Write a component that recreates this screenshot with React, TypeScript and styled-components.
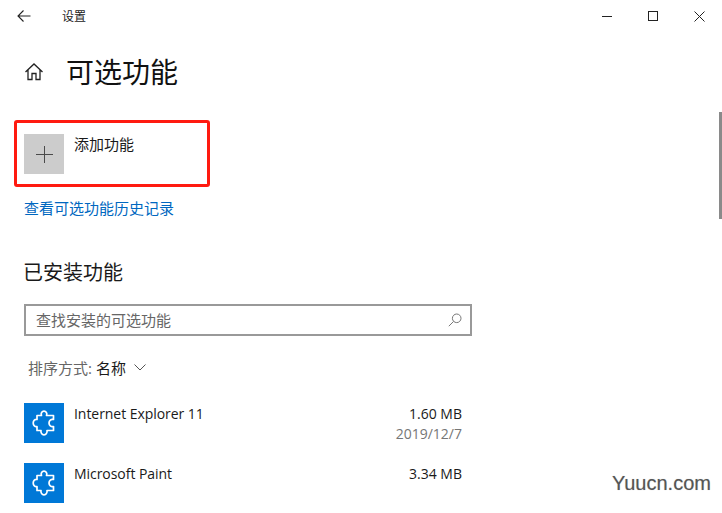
import React from "react";
import styled, { createGlobalStyle } from "styled-components";

const Global = createGlobalStyle`
  html, body { margin: 0; padding: 0; background: #fff; overflow: hidden; }
  body { font-family: "Open Sans", "Noto Sans CJK SC", sans-serif; color: #1a1a1a; }
`;
const Page = styled.div`
  position: relative; width: 722px; height: 513px; overflow: hidden; background: #fff;
`;
const TitleBar = styled.header`
  display: flex; align-items: center; height: 32px; padding-left: 16px;
`;
const IconSlot = styled.span`
  display: flex; flex: none; color: #222;
`;
const AppName = styled.span`
  margin: 2px 0 0 30px; font-size: 12px; line-height: 30px; color: #222;
`;
const WindowControls = styled.div`
  display: flex; align-items: center; margin-left: auto; margin-right: 17px; gap: 36px;
`;
const Content = styled.main`
  display: flex; flex-direction: column; align-items: flex-start; padding-left: 24px; width: 448px;
`;
const TitleRow = styled.div`
  display: flex; align-items: center; gap: 22px; height: 40px; margin-top: 20px;
`;
const Title = styled.h1`
  margin: 0; font-size: 28px; font-weight: 400; line-height: 40px; color: #111;
`;
const AddRow = styled.div`
  display: flex; gap: 10px; margin-top: 42px;
`;
const Tile = styled.div<{ $bg: string }>`
  width: 40px; height: 40px; flex: none; display: flex; align-items: center; justify-content: center;
  background: ${(p) => p.$bg};
`;
const AddLabel = styled.span`
  font-size: 15px; line-height: 20px; color: #1a1a1a;
`;
const RowLabel = styled.span`
  font-size: 14px; line-height: 20px; letter-spacing: -0.05px; color: #1a1a1a;
`;
const HistoryLink = styled.a`
  margin-top: 23px; font-size: 15px; line-height: 22px; color: #0067c0;
`;
const Heading = styled.h2`
  margin: 40px 0 0 -1px; font-size: 20px; font-weight: 400; line-height: 28px; color: #1a1a1a;
`;
const SearchBox = styled.div`
  box-sizing: border-box; width: 448px; height: 32px; margin-top: 17px; border: 2px solid #999;
  display: flex; align-items: center; justify-content: space-between; padding: 0 8px 0 10px;
`;
const Placeholder = styled.span`
  font-size: 15px; line-height: 22px; color: #666;
`;
const SortRow = styled.div`
  display: flex; align-items: center; margin: 20px 0 0 4px; height: 22px; font-size: 15px; color: #666;
`;
const SortValue = styled.span`
  margin-left: 4px; color: #1a1a1a;
`;
const Chevron = styled.span`
  display: flex; margin-left: 8px; color: #555;
`;
const List = styled.div`
  display: flex; flex-direction: column; gap: 20px; margin-top: 25px; width: 438px;
`;
const Feature = styled.div`
  display: flex; gap: 10px;
`;
const Info = styled.div`
  flex: 1; display: flex; justify-content: space-between; padding-top: 1px;
`;
const Meta = styled.div`
  display: flex; flex-direction: column; align-items: flex-end;
`;
const Size = styled.span`
  font-size: 14px; line-height: 20px; color: #1a1a1a;
`;
const DateText = styled.span`
  font-size: 14px; line-height: 19px; color: #767676;
`;
const Highlight = styled.div`
  position: absolute; left: 14px; top: 120px; width: 196px; height: 67px; box-sizing: border-box;
  border: 3px solid #ff1a10; border-radius: 3px;
`;
const ScrollThumb = styled.div`
  position: absolute; right: 0; top: 112px; width: 3px; height: 107px; background: #8a8a8a;
`;
const Watermark = styled.div`
  position: absolute; left: 612px; top: 470px; font-family: "Liberation Sans", sans-serif;
  font-size: 20px; line-height: 26px; color: #555; text-shadow: 0 0 1px #bbb;
`;

const Puzzle = () => (
  <svg width="24" height="26" viewBox="0 0 24 26" fill="none" stroke="#fff" strokeWidth="1.7" strokeLinejoin="round">
    <path d="M5 5.5 H9.5 C8.5 3 10 1.2 12 1.2 C14 1.2 15.5 3 14.5 5.5 H21.5 V9.5 C19 8.8 17 10.6 17 13 C17 15.4 19 17.2 21.5 16.5 V20.5 H15 C15.5 23 14 24.8 12 24.8 C10 24.8 8.5 23 9 20.5 H5 V16.5 C3 17 1.2 15.4 1.2 13 C1.2 10.6 3 9 5 9.5 Z" />
  </svg>
);

const features = [
  { name: "Internet Explorer 11", size: "1.60 MB", date: "2019/12/7" },
  { name: "Microsoft Paint", size: "3.34 MB" },
];

export default function App() {
  return (
    <Page>
      <Global />
      <TitleBar>
        <IconSlot>
          <svg width="16" height="14" viewBox="0 0 16 14" fill="none" stroke="currentColor" strokeWidth="1.1">
            <path d="M2 7 H14.5 M7.5 1.5 L2 7 L7.5 12.5" />
          </svg>
        </IconSlot>
        <AppName>设置</AppName>
        <WindowControls>
          <IconSlot>
            <svg width="10" height="10" viewBox="0 0 10 10" stroke="currentColor" strokeWidth="1"><path d="M0 5.5 H10" /></svg>
          </IconSlot>
          <IconSlot>
            <svg width="10" height="10" viewBox="0 0 10 10" fill="none" stroke="currentColor" strokeWidth="1"><rect x=".5" y=".5" width="9" height="9" /></svg>
          </IconSlot>
          <IconSlot>
            <svg width="11" height="11" viewBox="0 0 11 11" stroke="currentColor" strokeWidth="1"><path d="M.5 .5 L10.5 10.5 M10.5 .5 L.5 10.5" /></svg>
          </IconSlot>
        </WindowControls>
      </TitleBar>
      <Content>
        <TitleRow>
          <IconSlot>
            <svg width="20" height="20" viewBox="0 0 20 20" fill="none" stroke="currentColor" strokeWidth="1.3">
              <path d="M1.5 10 L10 2 L18.5 10 M4 8 V17.5 H8 V11.5 H12 V17.5 H16 V8" />
            </svg>
          </IconSlot>
          <Title>可选功能</Title>
        </TitleRow>
        <AddRow>
          <Tile $bg="#ccc">
            <svg width="17" height="17" viewBox="0 0 17 17" stroke="#4a4a4a" strokeWidth="1"><path d="M8.5 0 V17 M0 8.5 H17" /></svg>
          </Tile>
          <AddLabel>添加功能</AddLabel>
        </AddRow>
        <HistoryLink>查看可选功能历史记录</HistoryLink>
        <Heading>已安装功能</Heading>
        <SearchBox>
          <Placeholder>查找安装的可选功能</Placeholder>
          <svg width="14" height="14" viewBox="0 0 14 14" fill="none" stroke="#777" strokeWidth="1">
            <circle cx="8.7" cy="5.3" r="4.3" /><path d="M5.6 8.4 L.8 13.2" />
          </svg>
        </SearchBox>
        <SortRow>
          排序方式:<SortValue>名称</SortValue>
          <Chevron>
            <svg width="12" height="7" viewBox="0 0 12 7" fill="none" stroke="currentColor" strokeWidth="1"><path d="M.5 .5 L6 6 L11.5 .5" /></svg>
          </Chevron>
        </SortRow>
        <List>
          {features.map((f) => (
            <Feature key={f.name}>
              <Tile $bg="#0078d7"><Puzzle /></Tile>
              <Info>
                <RowLabel>{f.name}</RowLabel>
                <Meta>
                  <Size>{f.size}</Size>
                  {f.date && <DateText>{f.date}</DateText>}
                </Meta>
              </Info>
            </Feature>
          ))}
        </List>
      </Content>
      <Highlight />
      <ScrollThumb />
      <Watermark>Yuucn.com</Watermark>
    </Page>
  );
}
